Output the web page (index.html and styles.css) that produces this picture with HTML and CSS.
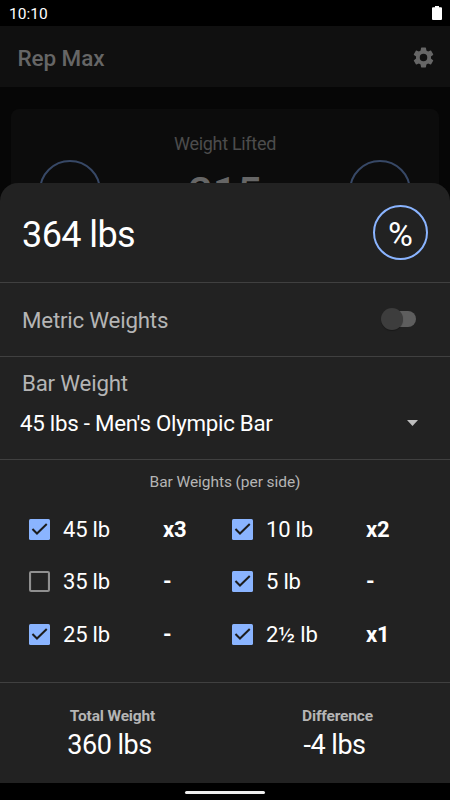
FILE: index.html
```
<!DOCTYPE html>
<html lang="en">
<head>
    <meta charset="UTF-8">
    <meta name="viewport" content="width=device-width, initial-scale=1.0">
    <title>Rep Max</title>
    <link rel="stylesheet" href="styles.css">
</head>
<body>
    <div class="screen">
        <!-- Status bar -->
        <div class="status-bar">
            <span>10:10</span>
            <svg class="battery" viewBox="0 0 10 14"><path d="M1 1.2h2V0h4v1.2h2a1 1 0 0 1 1 1V13a1 1 0 0 1-1 1H1a1 1 0 0 1-1-1V2.200a1 1 0 0 1 1-1z" fill="#fff"/></svg>
        </div>

        <!-- Page behind the sheet -->
        <header class="app-bar">
            <h1>Rep Max</h1>
            <svg class="gear" viewBox="0 0 24 24"><path fill="#666" d="M19.14 12.94c.04-.3.06-.61.06-.94 0-.32-.02-.64-.07-.94l2.030-1.580a.49.49 0 0 0 .12-.61l-1.920-3.320a.49.49 0 0 0-.59-.22l-2.390.96a7 7 0 0 0-1.620-.94l-.36-2.540a.48.48 0 0 0-.48-.41h-3.840a.48.48 0 0 0-.47.41l-.36 2.540a7.200 7.200 0 0 0-1.620.94l-2.390-.96a.48.48 0 0 0-.59.22L2.740 8.870a.47.47 0 0 0 .12.61l2.030 1.580c-.05.3-.09.63-.09.94s.02.64.07.94l-2.030 1.580a.49.49 0 0 0-.12.61l1.920 3.320c.12.22.37.29.59.22l2.390-.96c.5.38 1.030.7 1.620.94l.36 2.540c.05.24.24.41.48.41h3.840c.24 0 .44-.17.47-.41l.36-2.540a7 7 0 0 0 1.620-.94l2.390.96c.22.08.47 0 .59-.22l1.920-3.320a.47.47 0 0 0-.12-.61zM12 15.600a3.600 3.600 0 1 1 0-7.200 3.600 3.600 0 0 1 0 7.200z"/></svg>
        </header>
        <main class="page">
            <section class="lifted">
                <div class="lifted-label">Weight Lifted</div>
                <div class="lifted-row">
                    <div class="round-btn"></div>
                    <div class="lifted-value">215</div>
                    <div class="round-btn"></div>
                </div>
            </section>
        </main>

        <!-- Plate calculator sheet -->
        <div class="sheet">
            <div class="sheet-head">
                <span class="target">364 lbs</span>
                <button class="percent">%</button>
            </div>

            <div class="metric">
                <span class="label">Metric Weights</span>
                <span class="switch"></span>
            </div>

            <div class="bar">
                <div class="label">Bar Weight</div>
                <div class="select">
                    <span>45 lbs - Men's Olympic Bar</span>
                    <svg class="arrow" viewBox="0 0 11 6"><path d="M0 0h11L5.500 6z" fill="#bdbdbd"/></svg>
                </div>
            </div>

            <div class="plates">
                <div class="plates-title">Bar Weights (per side)</div>
                <div class="plates-grid">
                    <div class="plate">
                        <svg class="check" viewBox="0 0 20 20"><rect width="20" height="20" rx="1.500" fill="#8ab4ff"/><path d="M3.300 9.500l4.300 4.300 9.300-9.100" fill="none" stroke="#1c1c1c" stroke-width="1.900"/></svg>
                        <span class="name">45 lb</span><b>x3</b>
                    </div>
                    <div class="plate">
                        <svg class="check" viewBox="0 0 20 20"><rect width="20" height="20" rx="1.500" fill="#8ab4ff"/><path d="M3.300 9.500l4.300 4.300 9.300-9.100" fill="none" stroke="#1c1c1c" stroke-width="1.900"/></svg>
                        <span class="name">10 lb</span><b>x2</b>
                    </div>
                    <div class="plate">
                        <svg class="check" viewBox="0 0 20 20"><rect x="1" y="1" width="18" height="18" rx="1" fill="none" stroke="#8f8f8f" stroke-width="2"/></svg>
                        <span class="name">35 lb</span><b>-</b>
                    </div>
                    <div class="plate">
                        <svg class="check" viewBox="0 0 20 20"><rect width="20" height="20" rx="1.500" fill="#8ab4ff"/><path d="M3.300 9.500l4.300 4.300 9.300-9.100" fill="none" stroke="#1c1c1c" stroke-width="1.900"/></svg>
                        <span class="name">5 lb</span><b>-</b>
                    </div>
                    <div class="plate">
                        <svg class="check" viewBox="0 0 20 20"><rect width="20" height="20" rx="1.500" fill="#8ab4ff"/><path d="M3.300 9.500l4.300 4.300 9.300-9.100" fill="none" stroke="#1c1c1c" stroke-width="1.900"/></svg>
                        <span class="name">25 lb</span><b>-</b>
                    </div>
                    <div class="plate">
                        <svg class="check" viewBox="0 0 20 20"><rect width="20" height="20" rx="1.500" fill="#8ab4ff"/><path d="M3.300 9.500l4.300 4.300 9.300-9.100" fill="none" stroke="#1c1c1c" stroke-width="1.900"/></svg>
                        <span class="name">2½ lb</span><b>x1</b>
                    </div>
                </div>
            </div>

            <div class="totals">
                <div class="total">
                    <div class="total-label">Total Weight</div>
                    <div class="total-value">360 lbs</div>
                </div>
                <div class="total">
                    <div class="total-label">Difference</div>
                    <div class="total-value">-4 lbs</div>
                </div>
            </div>
        </div>

        <!-- Navigation bar -->
        <div class="nav-bar"><span class="handle"></span></div>
    </div>
</body>
</html>
```
FILE: styles.css
```
* {
  box-sizing: border-box;
}

body {
  margin: 0;
  background: #000;
  color: #fff;
  font-family: Roboto, "Liberation Sans", sans-serif;
}

.screen {
  position: relative;
  display: flex;
  flex-direction: column;
  width: 450px;
  height: 800px;
  overflow: hidden;
}

.status-bar {
  display: flex;
  justify-content: space-between;
  align-items: center;
  height: 26px;
  padding: 1px 8px 0 9px;
  font-size: 15.5px;
}

.battery {
  width: 10px;
  height: 14px;
  margin-top: -1px;
}

/* Dimmed page */
.app-bar {
  display: flex;
  justify-content: space-between;
  align-items: center;
  height: 61px;
  padding: 0 14px 0 17.5px;
  background: #101010;
  color: #666;
}

.app-bar h1 {
  margin: 2px 0 0;
  font-size: 22.5px;
  font-weight: 500;
  letter-spacing: -0.1px;
}

.gear {
  width: 25px;
  height: 25px;
  margin-top: 1px;
}

.page {
  flex: 1;
  min-height: 0;
  padding: 22px 11px 0;
  background: #060606;
}

.lifted {
  height: 200px;
  padding: 24px 28px 0;
  border-radius: 8px;
  background: #0c0c0c;
}

.lifted-label {
  height: 27px;
  color: #4c4c4c;
  font-size: 18px;
  letter-spacing: -0.3px;
  line-height: 22px;
  text-align: center;
}

.lifted-row {
  display: flex;
  justify-content: space-between;
}

.round-btn {
  width: 62px;
  height: 62px;
  border: 2px solid #374866;
  border-radius: 50%;
}

.lifted-value {
  margin-top: 7px;
  color: #666;
  font-size: 43px;
  font-weight: 500;
}

/* Bottom sheet */
.sheet {
  position: absolute;
  left: 0;
  right: 0;
  bottom: 17px;
  height: 600px;
  border-radius: 18px 18px 0 0;
  background: #222;
}

.sheet-head {
  display: flex;
  justify-content: space-between;
  align-items: center;
  height: 100px;
  padding: 0 22px;
  border-bottom: 1px solid #404040;
}

.target {
  margin-top: 4px;
  font-size: 36px;
  letter-spacing: -0.6px;
}

.percent {
  width: 55px;
  height: 55px;
  padding: 3px 0 0;
  border: 2px solid #8ab4ff;
  border-radius: 50%;
  background: none;
  color: #fff;
  font-family: inherit;
  font-size: 34px;
  line-height: 48px;
}

.label {
  color: #b5b5b5;
  font-size: 22.3px;
  letter-spacing: -0.2px;
  line-height: 26px;
}

.metric {
  display: flex;
  justify-content: space-between;
  align-items: center;
  height: 74px;
  padding: 0 34px 0 22px;
  border-bottom: 1px solid #404040;
}

.switch {
  position: relative;
  width: 32px;
  height: 16px;
  margin-top: -1px;
  border-radius: 8px;
  background: #5e5e5e;
}

.switch:before {
  content: '';
  position: absolute;
  top: -3px;
  left: -3px;
  width: 22px;
  height: 22px;
  border-radius: 50%;
  background: #3d3d3d;
  box-shadow: 0 1px 1px rgba(0, 0, 0, 0.3);
}

.bar {
  height: 103px;
  padding: 13px 32px 0 22px;
  border-bottom: 1px solid #404040;
}

.select {
  display: flex;
  justify-content: space-between;
  align-items: center;
  margin: 14px 0 0 -2px;
  font-size: 22.3px;
  letter-spacing: -0.26px;
  line-height: 26px;
}

.arrow {
  width: 11px;
  height: 6px;
}

.plates {
  height: 223px;
  border-bottom: 1px solid #404040;
}

.plates-title {
  padding-top: 12px;
  color: #b5b5b5;
  font-size: 15.5px;
  letter-spacing: -0.07px;
  line-height: 20px;
  text-align: center;
}

.plates-grid {
  display: grid;
  grid-template-columns: 203px 1fr;
  grid-auto-rows: 52.5px;
  margin: 11px 0 0 29px;
}

.plate {
  display: flex;
  align-items: center;
  font-size: 22px;
  letter-spacing: -0.2px;
}

.check {
  width: 21px;
  height: 21px;
}

.name {
  width: 100px;
  margin-left: 13px;
}

.totals {
  display: flex;
  padding: 23px 0 0;
}

.total {
  flex: 1;
  text-align: center;
}

.total-label {
  color: #b5b5b5;
  font-size: 15.5px;
  font-weight: 700;
  letter-spacing: -0.15px;
  line-height: 20px;
}

.total-value {
  padding: 1px 6px 0 0;
  font-size: 27px;
  letter-spacing: -0.5px;
  line-height: 36px;
}

.nav-bar {
  position: absolute;
  left: 0;
  right: 0;
  bottom: 0;
  display: flex;
  justify-content: center;
  height: 17px;
  padding-top: 8px;
  background: #000;
}

.handle {
  width: 80px;
  height: 3px;
  border-radius: 2px;
  background: #eee;
}
```
